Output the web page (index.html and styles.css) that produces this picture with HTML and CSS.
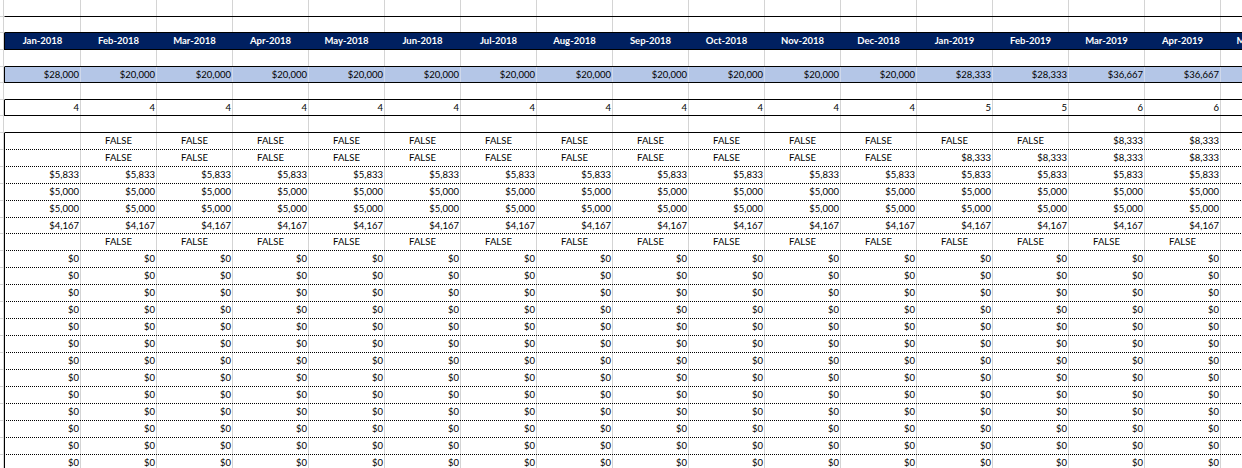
FILE: index.html
```html
<!DOCTYPE html>
<html>
<head>
<meta charset="utf-8">
<link rel="stylesheet" href="styles.css">
</head>
<body>
<div class="sheet">
  <div class="row bl"><div class="gut"></div><div class="cells"><div class="c"></div><div class="c"></div><div class="c"></div><div class="c"></div><div class="c"></div><div class="c"></div><div class="c"></div><div class="c"></div><div class="c"></div><div class="c"></div><div class="c"></div><div class="c"></div><div class="c"></div><div class="c"></div><div class="c"></div><div class="c"></div><div class="c"></div></div></div>
  <div class="row h16 bl"><div class="gut"></div><div class="cells"><div class="c"></div><div class="c"></div><div class="c"></div><div class="c"></div><div class="c"></div><div class="c"></div><div class="c"></div><div class="c"></div><div class="c"></div><div class="c"></div><div class="c"></div><div class="c"></div><div class="c"></div><div class="c"></div><div class="c"></div><div class="c"></div><div class="c"></div></div></div>
  <div class="row hdr"><div class="gut"></div><div class="cells"><div class="c">Jan-2018</div><div class="c">Feb-2018</div><div class="c">Mar-2018</div><div class="c">Apr-2018</div><div class="c">May-2018</div><div class="c">Jun-2018</div><div class="c">Jul-2018</div><div class="c">Aug-2018</div><div class="c">Sep-2018</div><div class="c">Oct-2018</div><div class="c">Nov-2018</div><div class="c">Dec-2018</div><div class="c">Jan-2019</div><div class="c">Feb-2019</div><div class="c">Mar-2019</div><div class="c">Apr-2019</div><div class="c">May-2019</div></div></div>
  <div class="row bl"><div class="gut"></div><div class="cells"><div class="c"></div><div class="c"></div><div class="c"></div><div class="c"></div><div class="c"></div><div class="c"></div><div class="c"></div><div class="c"></div><div class="c"></div><div class="c"></div><div class="c"></div><div class="c"></div><div class="c"></div><div class="c"></div><div class="c"></div><div class="c"></div><div class="c"></div></div></div>
  <div class="row h16 blue"><div class="gut"></div><div class="cells"><div class="c">$28,000</div><div class="c">$20,000</div><div class="c">$20,000</div><div class="c">$20,000</div><div class="c">$20,000</div><div class="c">$20,000</div><div class="c">$20,000</div><div class="c">$20,000</div><div class="c">$20,000</div><div class="c">$20,000</div><div class="c">$20,000</div><div class="c">$20,000</div><div class="c">$28,333</div><div class="c">$28,333</div><div class="c">$36,667</div><div class="c">$36,667</div><div class="c"></div></div></div>
  <div class="row bl"><div class="gut"></div><div class="cells"><div class="c"></div><div class="c"></div><div class="c"></div><div class="c"></div><div class="c"></div><div class="c"></div><div class="c"></div><div class="c"></div><div class="c"></div><div class="c"></div><div class="c"></div><div class="c"></div><div class="c"></div><div class="c"></div><div class="c"></div><div class="c"></div><div class="c"></div></div></div>
  <div class="row h16 cnt"><div class="gut"></div><div class="cells"><div class="c">4</div><div class="c">4</div><div class="c">4</div><div class="c">4</div><div class="c">4</div><div class="c">4</div><div class="c">4</div><div class="c">4</div><div class="c">4</div><div class="c">4</div><div class="c">4</div><div class="c">4</div><div class="c">5</div><div class="c">5</div><div class="c">6</div><div class="c">6</div><div class="c"></div></div></div>
  <div class="row bl"><div class="gut"></div><div class="cells"><div class="c"></div><div class="c"></div><div class="c"></div><div class="c"></div><div class="c"></div><div class="c"></div><div class="c"></div><div class="c"></div><div class="c"></div><div class="c"></div><div class="c"></div><div class="c"></div><div class="c"></div><div class="c"></div><div class="c"></div><div class="c"></div><div class="c"></div></div></div>

  <div class="row t"><div class="gut"></div><div class="cells"><div class="c"></div><div class="c b">FALSE</div><div class="c b">FALSE</div><div class="c b">FALSE</div><div class="c b">FALSE</div><div class="c b">FALSE</div><div class="c b">FALSE</div><div class="c b">FALSE</div><div class="c b">FALSE</div><div class="c b">FALSE</div><div class="c b">FALSE</div><div class="c b">FALSE</div><div class="c b">FALSE</div><div class="c b">FALSE</div><div class="c">$8,333</div><div class="c">$8,333</div><div class="c"></div></div></div>
  <div class="row t"><div class="gut"></div><div class="cells"><div class="c"></div><div class="c b">FALSE</div><div class="c b">FALSE</div><div class="c b">FALSE</div><div class="c b">FALSE</div><div class="c b">FALSE</div><div class="c b">FALSE</div><div class="c b">FALSE</div><div class="c b">FALSE</div><div class="c b">FALSE</div><div class="c b">FALSE</div><div class="c b">FALSE</div><div class="c">$8,333</div><div class="c">$8,333</div><div class="c">$8,333</div><div class="c">$8,333</div><div class="c"></div></div></div>
  <div class="row t"><div class="gut"></div><div class="cells"><div class="c">$5,833</div><div class="c">$5,833</div><div class="c">$5,833</div><div class="c">$5,833</div><div class="c">$5,833</div><div class="c">$5,833</div><div class="c">$5,833</div><div class="c">$5,833</div><div class="c">$5,833</div><div class="c">$5,833</div><div class="c">$5,833</div><div class="c">$5,833</div><div class="c">$5,833</div><div class="c">$5,833</div><div class="c">$5,833</div><div class="c">$5,833</div><div class="c"></div></div></div>
  <div class="row t"><div class="gut"></div><div class="cells"><div class="c">$5,000</div><div class="c">$5,000</div><div class="c">$5,000</div><div class="c">$5,000</div><div class="c">$5,000</div><div class="c">$5,000</div><div class="c">$5,000</div><div class="c">$5,000</div><div class="c">$5,000</div><div class="c">$5,000</div><div class="c">$5,000</div><div class="c">$5,000</div><div class="c">$5,000</div><div class="c">$5,000</div><div class="c">$5,000</div><div class="c">$5,000</div><div class="c"></div></div></div>
  <div class="row t"><div class="gut"></div><div class="cells"><div class="c">$5,000</div><div class="c">$5,000</div><div class="c">$5,000</div><div class="c">$5,000</div><div class="c">$5,000</div><div class="c">$5,000</div><div class="c">$5,000</div><div class="c">$5,000</div><div class="c">$5,000</div><div class="c">$5,000</div><div class="c">$5,000</div><div class="c">$5,000</div><div class="c">$5,000</div><div class="c">$5,000</div><div class="c">$5,000</div><div class="c">$5,000</div><div class="c"></div></div></div>
  <div class="row h16 t"><div class="gut"></div><div class="cells"><div class="c">$4,167</div><div class="c">$4,167</div><div class="c">$4,167</div><div class="c">$4,167</div><div class="c">$4,167</div><div class="c">$4,167</div><div class="c">$4,167</div><div class="c">$4,167</div><div class="c">$4,167</div><div class="c">$4,167</div><div class="c">$4,167</div><div class="c">$4,167</div><div class="c">$4,167</div><div class="c">$4,167</div><div class="c">$4,167</div><div class="c">$4,167</div><div class="c"></div></div></div>
  <div class="row t"><div class="gut"></div><div class="cells"><div class="c"></div><div class="c b">FALSE</div><div class="c b">FALSE</div><div class="c b">FALSE</div><div class="c b">FALSE</div><div class="c b">FALSE</div><div class="c b">FALSE</div><div class="c b">FALSE</div><div class="c b">FALSE</div><div class="c b">FALSE</div><div class="c b">FALSE</div><div class="c b">FALSE</div><div class="c b">FALSE</div><div class="c b">FALSE</div><div class="c b">FALSE</div><div class="c b">FALSE</div><div class="c"></div></div></div>

  <div class="row t"><div class="gut"></div><div class="cells"><div class="c">$0</div><div class="c">$0</div><div class="c">$0</div><div class="c">$0</div><div class="c">$0</div><div class="c">$0</div><div class="c">$0</div><div class="c">$0</div><div class="c">$0</div><div class="c">$0</div><div class="c">$0</div><div class="c">$0</div><div class="c">$0</div><div class="c">$0</div><div class="c">$0</div><div class="c">$0</div><div class="c"></div></div></div>
  <div class="row t"><div class="gut"></div><div class="cells"><div class="c">$0</div><div class="c">$0</div><div class="c">$0</div><div class="c">$0</div><div class="c">$0</div><div class="c">$0</div><div class="c">$0</div><div class="c">$0</div><div class="c">$0</div><div class="c">$0</div><div class="c">$0</div><div class="c">$0</div><div class="c">$0</div><div class="c">$0</div><div class="c">$0</div><div class="c">$0</div><div class="c"></div></div></div>
  <div class="row t"><div class="gut"></div><div class="cells"><div class="c">$0</div><div class="c">$0</div><div class="c">$0</div><div class="c">$0</div><div class="c">$0</div><div class="c">$0</div><div class="c">$0</div><div class="c">$0</div><div class="c">$0</div><div class="c">$0</div><div class="c">$0</div><div class="c">$0</div><div class="c">$0</div><div class="c">$0</div><div class="c">$0</div><div class="c">$0</div><div class="c"></div></div></div>
  <div class="row t"><div class="gut"></div><div class="cells"><div class="c">$0</div><div class="c">$0</div><div class="c">$0</div><div class="c">$0</div><div class="c">$0</div><div class="c">$0</div><div class="c">$0</div><div class="c">$0</div><div class="c">$0</div><div class="c">$0</div><div class="c">$0</div><div class="c">$0</div><div class="c">$0</div><div class="c">$0</div><div class="c">$0</div><div class="c">$0</div><div class="c"></div></div></div>
  <div class="row t"><div class="gut"></div><div class="cells"><div class="c">$0</div><div class="c">$0</div><div class="c">$0</div><div class="c">$0</div><div class="c">$0</div><div class="c">$0</div><div class="c">$0</div><div class="c">$0</div><div class="c">$0</div><div class="c">$0</div><div class="c">$0</div><div class="c">$0</div><div class="c">$0</div><div class="c">$0</div><div class="c">$0</div><div class="c">$0</div><div class="c"></div></div></div>
  <div class="row t"><div class="gut"></div><div class="cells"><div class="c">$0</div><div class="c">$0</div><div class="c">$0</div><div class="c">$0</div><div class="c">$0</div><div class="c">$0</div><div class="c">$0</div><div class="c">$0</div><div class="c">$0</div><div class="c">$0</div><div class="c">$0</div><div class="c">$0</div><div class="c">$0</div><div class="c">$0</div><div class="c">$0</div><div class="c">$0</div><div class="c"></div></div></div>
  <div class="row t"><div class="gut"></div><div class="cells"><div class="c">$0</div><div class="c">$0</div><div class="c">$0</div><div class="c">$0</div><div class="c">$0</div><div class="c">$0</div><div class="c">$0</div><div class="c">$0</div><div class="c">$0</div><div class="c">$0</div><div class="c">$0</div><div class="c">$0</div><div class="c">$0</div><div class="c">$0</div><div class="c">$0</div><div class="c">$0</div><div class="c"></div></div></div>
  <div class="row t"><div class="gut"></div><div class="cells"><div class="c">$0</div><div class="c">$0</div><div class="c">$0</div><div class="c">$0</div><div class="c">$0</div><div class="c">$0</div><div class="c">$0</div><div class="c">$0</div><div class="c">$0</div><div class="c">$0</div><div class="c">$0</div><div class="c">$0</div><div class="c">$0</div><div class="c">$0</div><div class="c">$0</div><div class="c">$0</div><div class="c"></div></div></div>
  <div class="row t"><div class="gut"></div><div class="cells"><div class="c">$0</div><div class="c">$0</div><div class="c">$0</div><div class="c">$0</div><div class="c">$0</div><div class="c">$0</div><div class="c">$0</div><div class="c">$0</div><div class="c">$0</div><div class="c">$0</div><div class="c">$0</div><div class="c">$0</div><div class="c">$0</div><div class="c">$0</div><div class="c">$0</div><div class="c">$0</div><div class="c"></div></div></div>
  <div class="row t"><div class="gut"></div><div class="cells"><div class="c">$0</div><div class="c">$0</div><div class="c">$0</div><div class="c">$0</div><div class="c">$0</div><div class="c">$0</div><div class="c">$0</div><div class="c">$0</div><div class="c">$0</div><div class="c">$0</div><div class="c">$0</div><div class="c">$0</div><div class="c">$0</div><div class="c">$0</div><div class="c">$0</div><div class="c">$0</div><div class="c"></div></div></div>
  <div class="row t"><div class="gut"></div><div class="cells"><div class="c">$0</div><div class="c">$0</div><div class="c">$0</div><div class="c">$0</div><div class="c">$0</div><div class="c">$0</div><div class="c">$0</div><div class="c">$0</div><div class="c">$0</div><div class="c">$0</div><div class="c">$0</div><div class="c">$0</div><div class="c">$0</div><div class="c">$0</div><div class="c">$0</div><div class="c">$0</div><div class="c"></div></div></div>
  <div class="row t"><div class="gut"></div><div class="cells"><div class="c">$0</div><div class="c">$0</div><div class="c">$0</div><div class="c">$0</div><div class="c">$0</div><div class="c">$0</div><div class="c">$0</div><div class="c">$0</div><div class="c">$0</div><div class="c">$0</div><div class="c">$0</div><div class="c">$0</div><div class="c">$0</div><div class="c">$0</div><div class="c">$0</div><div class="c">$0</div><div class="c"></div></div></div>
  <div class="row t"><div class="gut"></div><div class="cells"><div class="c">$0</div><div class="c">$0</div><div class="c">$0</div><div class="c">$0</div><div class="c">$0</div><div class="c">$0</div><div class="c">$0</div><div class="c">$0</div><div class="c">$0</div><div class="c">$0</div><div class="c">$0</div><div class="c">$0</div><div class="c">$0</div><div class="c">$0</div><div class="c">$0</div><div class="c">$0</div><div class="c"></div></div></div>
  <div class="row t"><div class="gut"></div><div class="cells"><div class="c">$0</div><div class="c">$0</div><div class="c">$0</div><div class="c">$0</div><div class="c">$0</div><div class="c">$0</div><div class="c">$0</div><div class="c">$0</div><div class="c">$0</div><div class="c">$0</div><div class="c">$0</div><div class="c">$0</div><div class="c">$0</div><div class="c">$0</div><div class="c">$0</div><div class="c">$0</div><div class="c"></div></div></div>
</div>
</body>
</html>
```
FILE: styles.css
```css
html, body {
  margin: 0;
  padding: 0;
  background: #fff;
  overflow: hidden;
}
body {
  width: 1242px;
  height: 468px;
  font-family: Lato, "Liberation Sans", sans-serif;
  font-size: 9.5px;
  color: #000;
}
.sheet {
  width: 1242px;
  height: 468px;
  overflow: hidden;
}
.row {
  display: flex;
  height: 17px;
  width: 1297px;
}
.row.h16 {
  height: 16px;
}
.gut {
  flex: none;
  width: 4px;
  box-sizing: border-box;
  border-right: 1px solid #d4d4d4;
  border-bottom: 1px solid #d4d4d4;
}
.cells {
  flex: none;
  display: flex;
  box-sizing: border-box;
  border-left: 1px solid transparent;
  border-bottom: 1px solid transparent;
}
.c {
  flex: none;
  width: 76px;
  box-sizing: border-box;
  border-right: 1px solid #d4d4d4;
  display: flex;
  align-items: center;
  justify-content: flex-end;
  padding-right: 1px;
  line-height: 12px;
  white-space: nowrap;
  overflow: hidden;
}
.c.b {
  justify-content: center;
  padding-right: 0;
}
.bl .cells {
  border-bottom-color: #000;
}
.hdr .cells {
  background: #002060;
  border-left-color: #000;
  border-bottom-color: #000;
}
.hdr .c {
  border-right-color: transparent;
  justify-content: center;
  padding-right: 0;
  color: #fff;
  font-weight: 700;
}
.blue .cells {
  background: #b4c6e7;
  border-left-color: #000;
  border-bottom-color: #000;
}
.blue .c {
  border-right-color: #cfd8ea;
}
.cnt .cells {
  border-left-color: #000;
  border-bottom-color: #000;
}
.t .cells {
  border-left-color: #000;
  border-bottom: 1px dotted #000;
}
```
